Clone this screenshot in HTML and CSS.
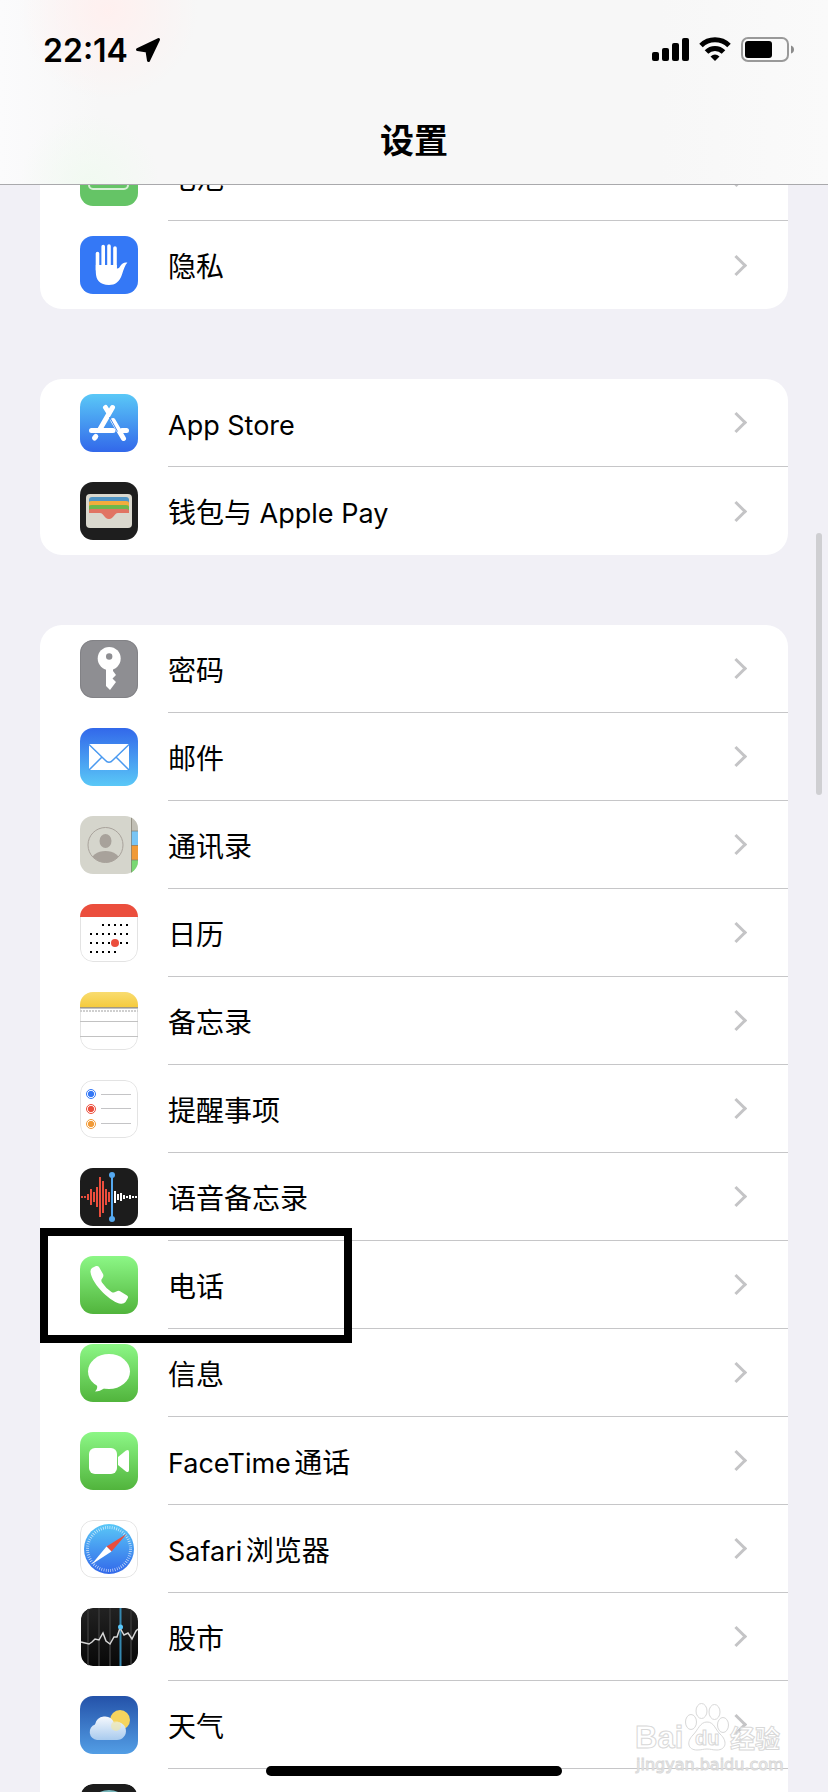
FILE: index.html
```html
<!DOCTYPE html>
<html lang="zh-CN">
<head>
  <meta charset="UTF-8">
  <meta name="viewport" content="width=device-width, initial-scale=1.0">
  <title>设置</title>
  <link rel="stylesheet" href="styles.css">
</head>
<body>

  <header class="header">
    <div class="status-bar">
      <span class="time">22:14</span>
      <svg class="location" width="26" height="26" viewBox="0 0 26 26"><path d="M23.5 2.500L13.500 23.500L12 14L2.500 12.500Z" stroke="#000" stroke-width="3" stroke-linejoin="round"/></svg>
      <div class="status-icons">
        <svg width="37" height="26" viewBox="0 0 37 26">
          <rect x="0" y="15" width="7" height="9" rx="2"/>
          <rect x="10" y="11" width="7" height="13" rx="2"/>
          <rect x="20" y="6" width="7" height="18" rx="2"/>
          <rect x="30" y="1" width="7" height="23" rx="2"/>
        </svg>
        <svg width="32" height="26" viewBox="0 0 32 26">
          <path d="M2 8.500A20 20 0 0 1 30 8.500" fill="none" stroke="#000" stroke-width="5"/>
          <path d="M7.500 15A12 12 0 0 1 24.500 15" fill="none" stroke="#000" stroke-width="5"/>
          <path d="M11.500 19.500Q16 15.500 20.500 19.500L16 24Z"/>
        </svg>
        <svg width="54" height="26" viewBox="0 0 54 26">
          <rect x="1" y="1" width="46" height="23" rx="6" fill="none" stroke="#999" stroke-width="2"/>
          <rect x="4" y="4" width="27" height="17" rx="3"/>
          <path d="M50 8.500Q53 9.500 53 12.500T50 16.500Z" fill="#8c8c8c"/>
        </svg>
      </div>
    </div>
    <h1 class="title">设置</h1>
  </header>

  <main class="settings">
    <ul class="group">
      <li><a class="row" href="#battery">
        <svg class="icon" viewBox="0 0 58 58"><rect width="58" height="58" fill="#65c466"/><rect x="9" y="20" width="39" height="21" rx="4" fill="none" stroke="#d5f0d5" stroke-width="2"/></svg>
        <span class="label">电池</span></a></li>
      <li><a class="row" href="#privacy">
        <svg class="icon" viewBox="0 0 58 58">
          <rect width="58" height="58" fill="#3478f6"/>
          <path d="M17.500 17.500V34M23.200 10.500V32M29 10V32M35 12V32" fill="none" stroke="#fff" stroke-width="3.600" stroke-linecap="round"/>
          <path d="M15.800 29H36.800V32.500C38.500 33 39.500 31.500 40.500 29.800C42 27.500 44 26 47.400 26.600C45 29 43.500 34 42 38.500C39.700 46 35 49 29 49C20 49 15.800 44 15.800 36Z" fill="#fff"/>
        </svg>
        <span class="label">隐私</span></a></li>
    </ul>

    <ul class="group">
      <li><a class="row" href="#appstore">
        <svg class="icon" viewBox="0 0 58 58">
          <defs><linearGradient id="store" x2="0" y2="1"><stop stop-color="#5ac8f7"/><stop offset="1" stop-color="#3268ea"/></linearGradient></defs>
          <rect width="58" height="58" fill="url(#store)"/>
          <g fill="none" stroke="#fff" stroke-width="5" stroke-linecap="round">
            <path d="M32.500 13.500L19.500 36M14.500 44L15.800 42.500M11.500 36.500H33M42 36.500H46.500"/>
            <path d="M25.500 13.500L28 17.500M33 26.500L43.500 44.500"/>
          </g>
          <path d="M29.500 23L37.500 37.500" stroke="#4389ee" stroke-width="1"/>
        </svg>
        <span class="label"><span><span class="latin">App Store</span></span></span></a></li>
      <li><a class="row" href="#wallet">
        <svg class="icon" viewBox="0 0 58 58">
          <rect width="58" height="58" fill="#1e1e1e"/>
          <rect x="6" y="12" width="46" height="34" rx="4" fill="#dad8ce"/>
          <path d="M9 31V18Q9 15 12 15H46Q49 15 49 18V31Z" fill="#5195c5"/>
          <path d="M9 31V20Q9 19 12 19H46Q49 19 49 21V31Z" fill="#f2ac3c"/>
          <path d="M9 31V24Q9 23 12 23H46Q49 23 49 25V31Z" fill="#6cb84d"/>
          <path d="M9 31V28Q9 27 12 27H46Q49 27 49 29V31H38C34 31 34 37 29 37S24 31 20 31Z" fill="#e17463"/>
        </svg>
        <span class="label"><span>钱包与<span class="latin"> Apple Pay</span></span></span></a></li>
    </ul>

    <ul class="group">
      <li><a class="row" href="#passwords">
        <svg class="icon" viewBox="0 0 58 58">
          <rect width="58" height="58" fill="#8e8e92"/>
          <rect x=".5" y=".5" width="57" height="57" rx="12.500" fill="none" stroke="#828286"/>
          <circle cx="29.200" cy="18.500" r="11.500" fill="#fff"/>
          <path d="M26 28H33V31L36 35L32.500 38.500L36 42L30 50L26 46Z" fill="#fff"/>
          <circle cx="29.200" cy="16.500" r="3.200" fill="#8e8e92"/>
        </svg>
        <span class="label">密码</span></a></li>
      <li><a class="row" href="#mail">
        <svg class="icon" viewBox="0 0 58 58">
          <defs><linearGradient id="mail" x2="0" y2="1"><stop stop-color="#3268ea"/><stop offset="1" stop-color="#5ac8f7"/></linearGradient></defs>
          <rect width="58" height="58" fill="url(#mail)"/>
          <rect x="9" y="16" width="40" height="26" rx="1" fill="#fff"/>
          <path d="M9 16.500L25 32Q29 36.500 33 32L49 16.500M9 42L21.500 29.500M49 42L36.500 29.500" fill="none" stroke="#4b9af0" stroke-width="1.500"/>
        </svg>
        <span class="label">邮件</span></a></li>
      <li><a class="row" href="#contacts">
        <svg class="icon" viewBox="0 0 58 58">
          <defs><clipPath id="face"><circle cx="25.500" cy="29" r="17.500"/></clipPath></defs>
          <rect width="58" height="58" fill="#d5d5cc"/>
          <rect x="51" width="7" height="15" fill="#c1bfb5"/>
          <rect x="51" y="15" width="7" height="14" fill="#78c5f5"/>
          <rect x="51" y="29" width="7" height="15" fill="#f09a37"/>
          <rect x="51" y="44" width="7" height="14" fill="#79d873"/>
          <path d="M51.500 0V58M51 15H58M51 29.500H58M51 44H58" stroke="#817e70" stroke-opacity=".7"/>
          <circle cx="25.500" cy="29" r="17.500" fill="none" stroke="#a8a29b"/>
          <ellipse cx="25.500" cy="25" rx="6" ry="7" fill="#a8a29b"/>
          <ellipse cx="25.500" cy="46" rx="15" ry="11" fill="#a8a29b" clip-path="url(#face)"/>
        </svg>
        <span class="label">通讯录</span></a></li>
      <li><a class="row" href="#calendar">
        <svg class="icon" viewBox="0 0 58 58">
          <rect x=".5" y=".5" width="57" height="57" rx="12.500" fill="#fff" stroke="#e3e3e3"/>
          <rect width="58" height="13" fill="#eb4e3d"/>
          <path d="M22 21H48M10 30H48M10 39H48M10 48H36" stroke="#000" stroke-width="2" stroke-dasharray="2 4"/>
          <circle cx="35" cy="39" r="4" fill="#eb4e3d"/>
        </svg>
        <span class="label">日历</span></a></li>
      <li><a class="row" href="#notes">
        <svg class="icon" viewBox="0 0 58 58">
          <defs><linearGradient id="notes" x2="0" y2="1"><stop stop-color="#f9dc70"/><stop offset="1" stop-color="#f5cb3e"/></linearGradient></defs>
          <rect x=".5" y=".5" width="57" height="57" rx="12.500" fill="#fff" stroke="#e3e3e3"/>
          <rect width="58" height="15" fill="url(#notes)"/>
          <path d="M0 15.500H58" stroke="#a39a82"/>
          <path d="M0 29.500H58M0 44.500H58M0 16.500H58" stroke="#c2c2c2"/>
          <path d="M0 19H58" stroke="#cfcfcf" stroke-width="2" stroke-dasharray="2 1"/>
        </svg>
        <span class="label">备忘录</span></a></li>
      <li><a class="row" href="#reminders">
        <svg class="icon" viewBox="0 0 58 58">
          <rect x=".5" y=".5" width="57" height="57" rx="12.500" fill="#fff" stroke="#e3e3e3"/>
          <g fill="#3478f6" stroke="#3478f6"><circle cx="11" cy="14" r="4.500" fill="none"/><circle cx="11" cy="14" r="2.700"/></g>
          <g fill="#eb4e3d" stroke="#eb4e3d"><circle cx="11" cy="29" r="4.500" fill="none"/><circle cx="11" cy="29" r="2.700"/></g>
          <g fill="#f19a37" stroke="#f19a37"><circle cx="11" cy="44" r="4.500" fill="none"/><circle cx="11" cy="44" r="2.700"/></g>
          <path d="M21 14.500H51M21 28.500H51M21 43.500H51" stroke="#c4c4c6"/>
        </svg>
        <span class="label">提醒事项</span></a></li>
      <li><a class="row" href="#voicememos">
        <svg class="icon" viewBox="0 0 58 58">
          <rect width="58" height="58" fill="#1c1c1c"/>
          <path d="M2 28V30M5 28V30M8 26V32M11 21V37M14 24V34M17 19V39M20 9V49M23 13V45M26 21V37M29 24V34" stroke="#eb4e3d" stroke-width="2"/>
          <path d="M35 23V35M38 26V32M41 25V33M44 27V31M47 28V30M50 27V31M53 28V30M56 28V30" stroke="#fff" stroke-width="2"/>
          <path d="M32 7V51" stroke="#55a9f0" stroke-width="2"/>
          <circle cx="32" cy="7" r="3" fill="#55a9f0"/><circle cx="32" cy="51" r="3" fill="#55a9f0"/>
        </svg>
        <span class="label">语音备忘录</span></a></li>
      <li class="marked"><a class="row" href="#phone">
        <svg class="icon" viewBox="0 0 58 58">
          <defs><linearGradient id="green" x2="0" y2="1"><stop stop-color="#8cf786"/><stop offset="1" stop-color="#51b43c"/></linearGradient></defs>
          <rect width="58" height="58" fill="url(#green)"/>
          <path d="M12 12L16 10Q18 9.500 19 11L23 18Q24 20 22.500 22L21.500 23.500Q21 25 22 26.500Q26 32.500 31.500 36Q33 37 34.500 36.300L37.500 35Q39 34.500 40.500 35.500L47 39.500Q48.500 40.500 47.800 42L45.500 46Q44 48 41 47.800C32 47 12 29 10.500 16Q10.300 13.500 12 12Z" fill="#fff"/>
        </svg>
        <span class="label">电话</span></a></li>
      <li><a class="row" href="#messages">
        <svg class="icon" viewBox="0 0 58 58">
          <rect width="58" height="58" fill="url(#green)"/>
          <ellipse cx="29" cy="27.500" rx="21" ry="17.500" fill="#fff"/>
          <path d="M16.500 40Q18.500 44 15 47.500Q20 47.500 24.500 44L25 40Z" fill="#fff"/>
        </svg>
        <span class="label">信息</span></a></li>
      <li><a class="row" href="#facetime">
        <svg class="icon" viewBox="0 0 58 58">
          <rect width="58" height="58" fill="url(#green)"/>
          <rect x="9" y="16" width="28" height="26" rx="6" fill="#fff"/>
          <path d="M38 25L46 18.500Q49 17 49 20V38Q49 41 46 39.500L38 33Z" fill="#fff"/>
        </svg>
        <span class="label"><span><span class="latin">FaceTime</span>通话</span></span></a></li>
      <li><a class="row" href="#safari">
        <svg class="icon" viewBox="0 0 58 58">
          <rect x=".5" y=".5" width="57" height="57" rx="12.500" fill="#fff" stroke="#e3e3e3"/>
          <circle cx="29" cy="29" r="25" fill="url(#store)"/>
          <circle cx="29" cy="29" r="21.500" fill="none" stroke="#fff" stroke-width="3" stroke-opacity=".75" stroke-dasharray=".7 1.551"/>
          <path d="M46.500 14L26.500 26.500L31.500 31.500Z" fill="#eb4e3d"/>
          <path d="M11.500 44.500L26.500 26.500L31.500 31.500Z" fill="#fff"/>
        </svg>
        <span class="label"><span><span class="latin">Safari</span>浏览器</span></span></a></li>
      <li><a class="row" href="#stocks">
        <svg class="icon" viewBox="0 0 58 58">
          <defs><linearGradient id="stocks" x2="0" y2="1"><stop stop-color="#222"/><stop offset="1" stop-color="#080808"/></linearGradient></defs>
          <rect x="1" width="57" height="58" rx="12" fill="url(#stocks)"/>
          <path d="M8 0V58M19 0V58M30 0V58M51 0V58" stroke="#303030" stroke-width="2"/>
          <path d="M40.500 0V58" stroke="#3588b0" stroke-width="2"/>
          <path d="M1 34L9 36L12 34L15 31L19 32L23 25L26 33L30 36L34 29L37 29L40 20L44 27L48 25L52 31L56 23L58 21" fill="none" stroke="#d6d6d6" stroke-width="1.500"/>
          <circle cx="40.500" cy="19" r="2.500" fill="#5ac8fa"/>
        </svg>
        <span class="label">股市</span></a></li>
      <li><a class="row" href="#weather">
        <svg class="icon" viewBox="0 0 58 58">
          <defs>
            <linearGradient id="sky" x2="0" y2="1"><stop stop-color="#2452a9"/><stop offset="1" stop-color="#539ee5"/></linearGradient>
            <linearGradient id="cloud" gradientUnits="userSpaceOnUse" x1="0" x2="0" y1="19" y2="44"><stop stop-color="#fafbfe"/><stop offset="1" stop-color="#a9cbee"/></linearGradient>
          </defs>
          <rect width="58" height="58" fill="url(#sky)"/>
          <circle cx="40" cy="24" r="10" fill="#f5d45e"/>
          <path d="M17 44A8 8 0 0 1 15 28.500A10 10 0 0 1 34 26.500A9 9 0 1 1 37 44Z" fill="url(#cloud)"/>
          <circle cx="36" cy="30" r="5" fill="#f4e7a2" fill-opacity=".6"/>
        </svg>
        <span class="label">天气</span></a></li>
      <li><a class="row" href="#more" aria-label="更多">
        <svg class="icon" viewBox="0 0 58 58"><rect x="1" width="56" height="58" rx="12" fill="#1c1c1c"/><circle cx="29" cy="27" r="20" fill="none" stroke="#78b7bc" stroke-width="2"/></svg>
        <span class="label"></span></a></li>
    </ul>
  </main>

  <div class="scrollbar"></div>

  <svg class="watermark" width="156" height="80" viewBox="0 0 156 80">
    <g fill="#fff" fill-opacity=".8" stroke="#d8d8d8" stroke-width="1">
      <ellipse cx="59" cy="26" rx="5.500" ry="7.500"/>
      <ellipse cx="69.500" cy="15" rx="5.500" ry="7.500"/>
      <ellipse cx="82.500" cy="16" rx="5.500" ry="7.500"/>
      <ellipse cx="91" cy="29" rx="5.500" ry="7.500"/>
      <path d="M75 26C82 26 83 33 88 38C96 45 94 54 85 54C80 54 79 53 75 53S70 54 65 54C56 54 54 46 61 39C66 34 68 26 75 26Z"/>
      <text class="mark-name" x="3" y="52">Bai</text>
      <text class="mark-du" x="63" y="49">du</text>
      <text class="mark-cn" x="98" y="52">经验</text>
      <text class="mark-url" x="4" y="74">jingyan.baidu.com</text>
    </g>
  </svg>

  <div class="home-indicator"></div>

</body>
</html>
```
FILE: styles.css
```css
*,
*::after {
  box-sizing: border-box;
}

body {
  position: relative;
  height: 100vh;
  margin: 0;
  overflow: hidden;
  background-color: #f1f0f6;
  color: #000;
  font-family: Inter, "Noto Sans CJK SC", sans-serif;
  font-size: 28px;
}

.header {
  position: absolute;
  top: 0;
  left: 0;
  right: 0;
  z-index: 1;
  height: 185px;
  border-bottom: 1px solid #a9a9ac;
  background:
    radial-gradient(circle at 108px 10px, #fff0ef, rgba(255, 240, 239, 0) 90px),
    radial-gradient(circle at 90px 184px, #f1faf1, rgba(241, 250, 241, 0) 70px),
    linear-gradient(90deg, #fbfbfc, #f7f7f7 100px, #f7f7f7 660px, #fafafa);
}

.status-bar {
  display: flex;
  align-items: center;
  height: 100px;
  padding: 0 33px 0 43px;
}

.time {
  font-size: 32px;
  font-weight: 600;
}

.location {
  margin-left: 7px;
}

.status-icons {
  display: flex;
  gap: 10px;
  margin-left: auto;
}

.title {
  margin: 0;
  font-size: 34px;
  font-weight: 600;
  line-height: 82px;
  text-align: center;
}

/* the list is scrolled so that its first row is half under the header */
.settings {
  display: flex;
  flex-direction: column;
  gap: 70px;
  padding: 133px 40px 0;
}

.group {
  margin: 0;
  padding: 0;
  overflow: hidden;
  border-radius: 22px;
  background-color: #fff;
  list-style: none;
}

.group:first-child {
  border-top-left-radius: 0;
  border-top-right-radius: 0;
}

.group:last-child {
  overflow: visible;
}

.row {
  display: flex;
  align-items: center;
  gap: 30px;
  height: 88px;
  padding-left: 40px;
  color: inherit;
  text-decoration: none;
}

.icon {
  flex: none;
  width: 58px;
  height: 58px;
  border-radius: 13px;
}

.label {
  display: flex;
  flex: 1;
  align-items: center;
  justify-content: space-between;
  height: 88px;
  padding-right: 44px;
  border-bottom: 1px solid #c6c6c8;
  font-family: "Noto Sans CJK SC", sans-serif;
  text-autospace: normal;
}

.latin {
  font-family: Inter, sans-serif;
  font-size: 27px;
}

.group li:last-child .label {
  border-bottom: none;
}

.label::after {
  content: "";
  width: 15px;
  height: 15px;
  border: solid #c4c4c6;
  border-width: 3px 3px 0 0;
  transform: rotate(45deg);
}

.marked {
  position: relative;
}

.marked::after {
  content: "";
  position: absolute;
  top: -13px;
  bottom: -14px;
  left: 0;
  width: 312px;
  border: 8px solid #000;
  pointer-events: none;
}

.scrollbar {
  position: absolute;
  top: 533px;
  right: 6px;
  width: 6px;
  height: 262px;
  border-radius: 3px;
  background-color: #cfcfd2;
}

.watermark {
  position: absolute;
  right: 40px;
  bottom: 16px;
}

.mark-name,
.mark-du {
  font-family: "Liberation Sans", sans-serif;
  font-weight: bold;
}

.mark-name {
  font-size: 31px;
}

.mark-du {
  font-size: 20px;
}

.mark-cn {
  font-family: "Noto Sans CJK SC", sans-serif;
  font-size: 25px;
  font-weight: bold;
}

.mark-url {
  font-family: "DejaVu Sans", sans-serif;
  font-size: 16px;
}

.home-indicator {
  position: absolute;
  bottom: 16px;
  left: 50%;
  width: 296px;
  height: 10px;
  margin-left: -148px;
  border-radius: 5px;
  background-color: #000;
}
```
